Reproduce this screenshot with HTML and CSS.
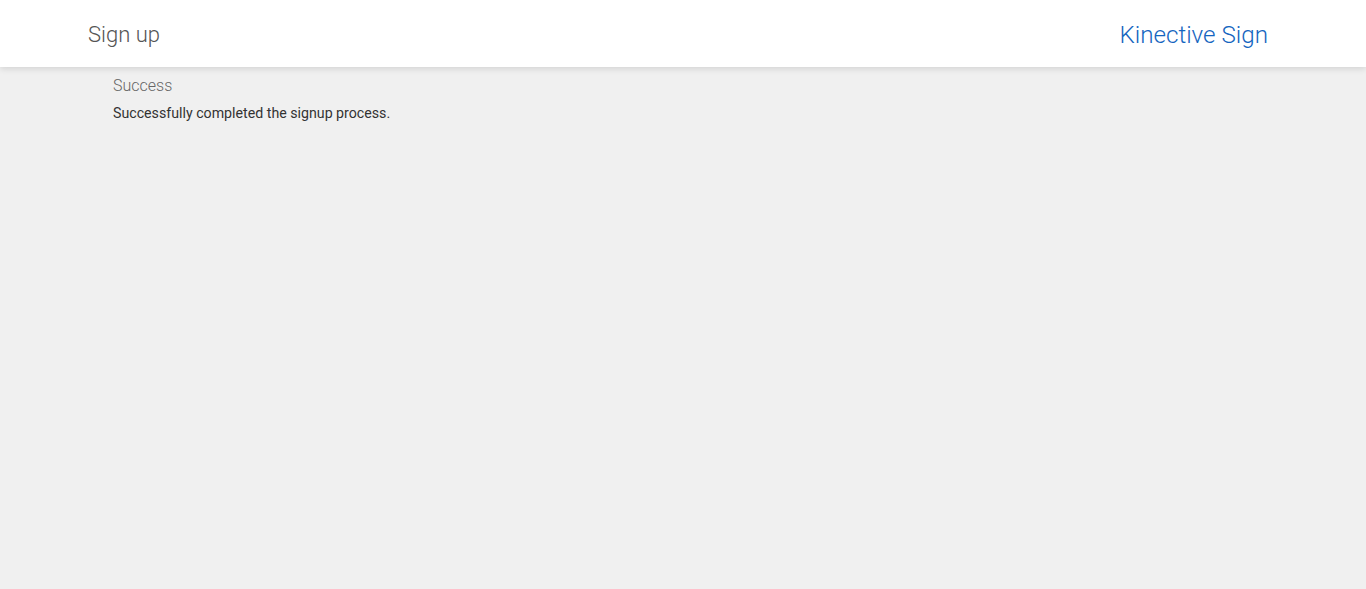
FILE: index.html
```html
<!DOCTYPE html>
<html>
<head>
<meta charset="utf-8">
<link rel="stylesheet" href="styles.css">
</head>
<body>
<header class="topbar">
  <div class="title">Sign up</div>
  <div class="brand">Kinective Sign</div>
</header>
<main class="content">
  <h2 class="heading">Success</h2>
  <p class="message">Successfully completed the signup process.</p>
</main>
</body>
</html>
```
FILE: styles.css
```css
html, body {
  margin: 0;
  padding: 0;
  height: 100%;
}
body {
  background: #f0f0f0;
  font-family: Roboto, "Liberation Sans", sans-serif;
}
.topbar {
  height: 67px;
  background: #fff;
  box-shadow: 0 2px 6px rgba(0,0,0,0.12);
  display: flex;
  align-items: center;
  justify-content: space-between;
  padding: 2px 98px 0 88px;
  box-sizing: border-box;
  position: relative;
}
.title {
  font-size: 22px;
  font-weight: 300;
  color: #555;
}
.brand {
  font-size: 24.2px;
  font-weight: 300;
  color: #1565c0;
}
.content {
  padding: 8px 0 0 113px;
}
.heading {
  margin: 0;
  font-size: 16px;
  font-weight: 300;
  color: #666;
  line-height: 22px;
}
.message {
  margin: 6px 0 0;
  font-size: 14.2px;
  color: #333;
  line-height: 20px;
}
```
